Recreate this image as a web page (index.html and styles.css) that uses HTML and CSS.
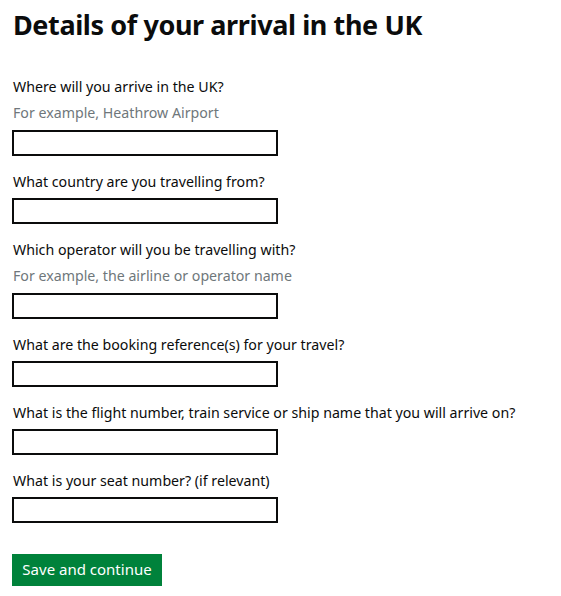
FILE: index.html
```html
<!doctype html>
<html lang="en">
<head>
    <meta charset="UTF-8">
    <title>Details of your arrival in the UK</title>
    <link rel="stylesheet" href="styles.css">
</head>
<body>
    <div class="page">
        <h1 class="heading">Details of your arrival in the UK</h1>
        <form class="form">
            <div class="field">
                <label class="label" for="port">Where will you arrive in the UK?</label>
                <div class="hint">For example, Heathrow Airport</div>
                <input class="input" id="port" type="text">
            </div>
            <div class="field">
                <label class="label" for="country">What country are you travelling from?</label>
                <input class="input" id="country" type="text">
            </div>
            <div class="field">
                <label class="label" for="operator">Which operator will you be travelling with?</label>
                <div class="hint">For example, the airline or operator name</div>
                <input class="input" id="operator" type="text">
            </div>
            <div class="field">
                <label class="label" for="booking">What are the booking reference(s) for your travel?</label>
                <input class="input" id="booking" type="text">
            </div>
            <div class="field">
                <label class="label" for="flight">What is the flight number, train service or ship name that you will arrive on?</label>
                <input class="input" id="flight" type="text">
            </div>
            <div class="field">
                <label class="label" for="seat">What is your seat number? (if relevant)</label>
                <input class="input" id="seat" type="text">
            </div>
            <button class="button" type="button">Save and continue</button>
        </form>
    </div>
</body>
</html>
```

FILE: styles.css
```css
*{
    margin: 0;
    padding: 0;
    box-sizing: border-box;
}
body{
    background: #fff;
    color: #0b0c0c;
    font-family: "Noto Sans", "Liberation Sans", sans-serif;
}
.page{
    padding: 5px 12px 0 12px;
}
.heading{
    font-size: 27px;
    line-height: 40px;
    font-weight: 700;
    letter-spacing: -0.4px;
    padding-left: 1px;
    margin-bottom: 32px;
}
.field{
    display: flex;
    flex-direction: column;
    align-items: flex-start;
    margin-bottom: 16px;
}
.label,
.hint{
    font-size: 14.2px;
    line-height: 20px;
    padding-left: 1px;
    margin-bottom: 6px;
}
.hint{
    color: #6f777b;
    margin-bottom: 7px;
}
.input{
    width: 266px;
    height: 26px;
    border: 2px solid #0b0c0c;
    background: #fff;
    font: inherit;
}
.button{
    margin-top: 15px;
    width: 150px;
    height: 32px;
    border: 0;
    background: #00823b;
    box-shadow: 0 2px 0 #003618;
    color: #fff;
    font-family: inherit;
    font-size: 15px;
    padding-bottom: 2px;
}
```
